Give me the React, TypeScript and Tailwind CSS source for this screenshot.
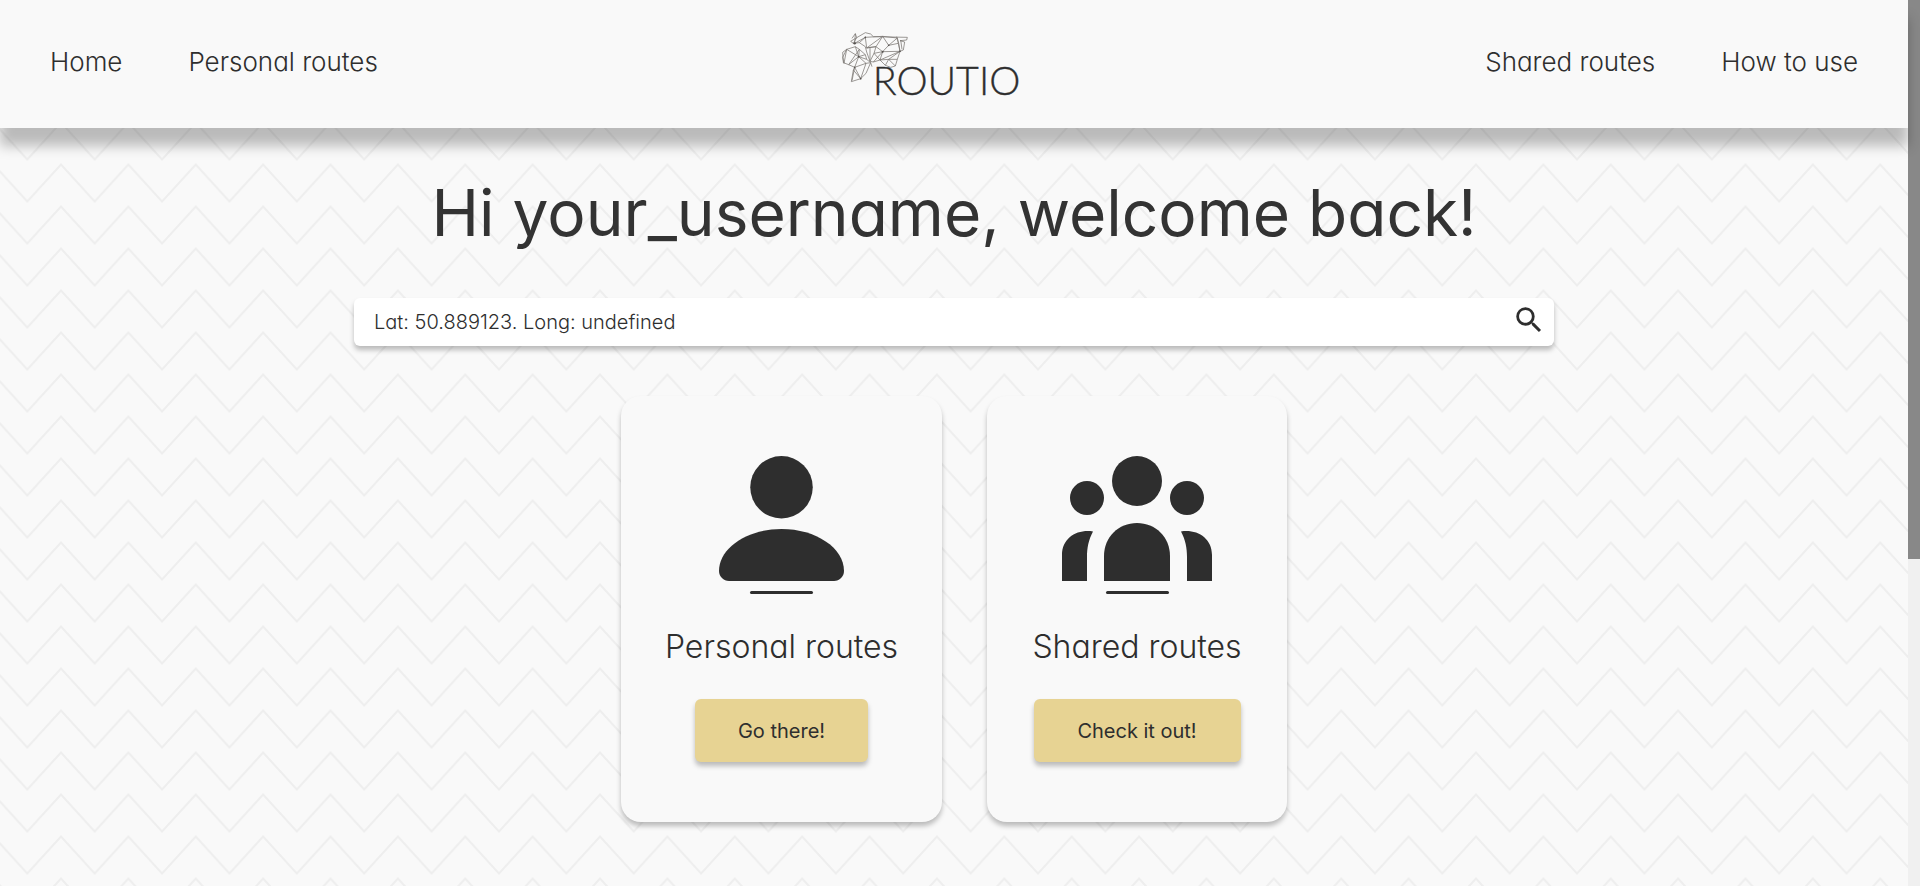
import React from "react";

const navLink = "text-[26px] leading-9 hover:underline";

function Chevrons() {
  return (
    <svg className="absolute inset-0 -z-10 h-full w-full" aria-hidden="true">
      <defs>
        <pattern id="chevrons" x="27.3" y="160" width="67.38" height="42" patternUnits="userSpaceOnUse">
          <path
            d="M-33.69 4.5 L0 41.5 L33.69 4.5 L67.38 41.5 L101.07 4.5 M-33.69 -37.5 L0 -0.5 L33.69 -37.5 L67.38 -0.5 L101.07 -37.5"
            fill="none"
            stroke="#eeeeee"
            strokeWidth="2"
          />
        </pattern>
      </defs>
      <rect width="100%" height="100%" fill="url(#chevrons)" />
    </svg>
  );
}

function Logo() {
  return (
    <svg viewBox="60 0 552 264" className="h-[88px] w-[184px]" role="img" aria-label="Routio">
      <g fill="none" stroke="#77736f" strokeWidth="2.2" strokeLinejoin="round">
        <path d="M96 55 L106 41 L110 53 L100 70 L92 64 L110 53 L136 38 L152 42 L160 50 L262 52 L260 60 L240 62 L254 66 L250 90 L240 94 L235 70 L230 50" />
        <path d="M106 41 L104 70 L136 52 L188 49 L232 54 L236 70 L240 94 L232 118 L226 138 L212 142 L196 136 L180 120 L160 126 L150 124 L140 96 L136 80 L118 68 L100 70" />
        <path d="M136 52 L118 68 M136 52 L140 84 L188 49 L168 80 L140 84 L150 82 L150 124 L162 100 L188 95 L206 76 L188 49 M206 76 L232 54 M206 76 L235 70 M168 80 L188 95 L240 94 M150 82 L168 80 L162 100 L180 120 L188 95 M188 95 L160 126 M180 120 L240 94 L206 118 L232 118 M206 118 L180 120 M206 118 L196 136 M206 118 L226 138 M242 60 L246 88" />
        <path d="M68 97 L80 88 L106 80 L118 88 L136 104 L140 118 L152 128 L138 160 L122 176 L94 185 L100 150 L104 142 L86 134 L70 128 Z" />
        <path d="M80 88 L68 112 L72 130 L80 88 L116 110 L106 80 M118 88 L116 110 L136 104 M86 134 L116 110 L104 142 L138 130 L116 110 M104 142 L122 176 L138 130 L152 128 M104 142 L96 182 M100 150 L122 176 M86 134 L118 88 M116 110 L140 118 M152 128 L156 140" />
      </g>
      <g fill="#55514e">
        <circle cx="188" cy="95" r="3" />
        <circle cx="104" cy="70" r="3.5" />
        <circle cx="206" cy="76" r="2.5" />
        <circle cx="116" cy="110" r="2.5" />
        <circle cx="122" cy="176" r="2.5" />
        <circle cx="104" cy="142" r="2.5" />
        <circle cx="240" cy="94" r="2.5" />
        <circle cx="136" cy="52" r="2.5" />
      </g>
      <text
        x="158"
        y="226"
        fontSize="118"
        fontWeight="300"
        fill="#2e2e2e"
        stroke="#2e2e2e"
        strokeWidth="1"
        className="font-['Lato',sans-serif]"
      >
        ROUTIO
      </text>
    </svg>
  );
}

function PersonIcon() {
  return (
    <svg viewBox="0 0 125 125" className="h-[125px] w-[125px]" fill="#2e2e2e" aria-hidden="true">
      <circle cx="62.5" cy="31.25" r="31.25" />
      <path d="M62.5 73 C97 73 125 92 125 115 C125 120.5 120.5 125 115 125 H10 C4.500 125 0 120.500 0 115 C0 92 28 73 62.500 73 Z" />
    </svg>
  );
}

function PeopleIcon() {
  return (
    <svg viewBox="0 0 150 125" className="h-[125px] w-[150px]" fill="#2e2e2e" aria-hidden="true">
      <circle cx="75" cy="25" r="25" />
      <circle cx="25" cy="42" r="17" />
      <circle cx="125" cy="42" r="17" />
      <path d="M42 125 V100 C42 81 56.500 67 75 67 C93.500 67 108 81 108 100 V125 Z" />
      <path d="M0 125 V99 C0 82 15 73 31 75.500 C26.500 84 25 92 25 101 V125 Z" />
      <path d="M150 125 V99 C150 82 135 73 119 75.500 C123.500 84 125 92 125 101 V125 Z" />
    </svg>
  );
}

type CardProps = {
  icon: React.ReactNode;
  title: string;
  action: string;
  width: string;
  buttonWidth: string;
};

function Card({ icon, title, action, width, buttonWidth }: CardProps) {
  return (
    <section
      className={`flex flex-col items-center rounded-[20px] bg-[#f9f9f9] py-[60px] shadow-[0_4px_5px_rgba(0,0,0,0.25)] ${width}`}
    >
      {icon}
      <div className="mt-[10px] h-[3px] w-[63px] rounded-full bg-[#2e2e2e]" />
      <h2 className="mt-[30px] text-[32px] leading-[45px] font-light">{title}</h2>
      <button
        type="button"
        className={`mt-[30px] h-[63px] rounded-[6px] bg-[#e7d393] text-xl font-normal shadow-[0_4px_5px_rgba(0,0,0,0.25)] ${buttonWidth}`}
      >
        {action}
      </button>
    </section>
  );
}

export default function App() {
  return (
    <div className="flex h-screen overflow-hidden bg-[#f9f9f9] font-['Inter',sans-serif] font-light text-[#2e2e2e] [font-feature-settings:'cv11']">
      <div className="relative isolate min-w-0 flex-1">
        <Chevrons />
        <header className="flex h-32 items-center justify-between bg-[#f9f9f9] px-[50px] shadow-[0_18px_12px_rgba(0,0,0,0.25)]">
          <nav className="flex gap-[66px] pb-1">
            <a href="#home" className={navLink}>Home</a>
            <a href="#personal" className={navLink}>Personal routes</a>
          </nav>
          <Logo />
          <nav className="flex gap-[66px] pb-1">
            <a href="#shared" className={navLink}>Shared routes</a>
            <a href="#help" className={navLink}>How to use</a>
          </nav>
        </header>
        <main className="flex flex-col items-center px-6">
          <h1 className="mt-10 text-center text-[64px] leading-[90px] font-normal text-[#333333]">
            Hi your_username, welcome back!
          </h1>
          <form
            className="mt-10 flex h-12 w-full max-w-[1200px] items-center rounded-[6px] bg-white pr-2 pl-5 shadow-[0_4px_5px_rgba(0,0,0,0.25)]"
            onSubmit={(event) => event.preventDefault()}
          >
            <input
              type="text"
              aria-label="Location"
              defaultValue="Lat: 50.889123. Long: undefined"
              className="min-w-0 flex-1 bg-transparent text-xl outline-none"
            />
            <button type="submit" aria-label="Search" className="pb-1">
              <svg viewBox="0 0 24 24" className="h-[34px] w-[34px]" fill="#2e2e2e" aria-hidden="true">
                <path d="M15.500 14h-.79l-.28-.27A6.470 6.470 0 0 0 16 9.500 6.500 6.500 0 1 0 9.500 16c1.610 0 3.090-.59 4.230-1.570l.27.28v.79l5 4.990L20.490 19l-4.990-5zm-6 0C7.010 14 5 11.990 5 9.500S7.010 5 9.500 5 14 7.010 14 9.500 11.990 14 9.500 14z" />
              </svg>
            </button>
          </form>
          <div className="mt-[50px] flex gap-[45px]">
            <Card icon={<PersonIcon />} title="Personal routes" action="Go there!" width="w-[321px]" buttonWidth="w-[173px]" />
            <Card icon={<PeopleIcon />} title="Shared routes" action="Check it out!" width="w-[300px]" buttonWidth="w-[207px]" />
          </div>
        </main>
      </div>
      <div className="w-3 bg-[#f0f0f0]" aria-hidden="true">
        <div className="h-[63.1%] bg-[#888888]" />
      </div>
    </div>
  );
}
